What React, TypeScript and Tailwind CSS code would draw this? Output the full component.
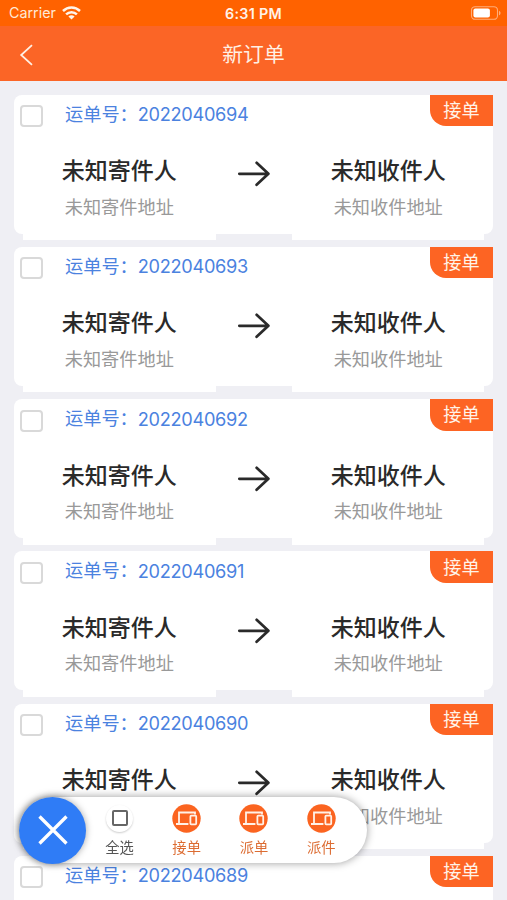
import { clsx } from "clsx";

const orders = [
  "2022040694",
  "2022040693",
  "2022040692",
  "2022040691",
  "2022040690",
  "2022040689",
];

const actions = ["接单", "派单", "派件"];

function StatusBar() {
  return (
    <div className="grid h-[26px] grid-cols-3 items-center bg-[#ff6200] px-[9px] text-white">
      <div className="flex items-center gap-[6px] pt-px text-[#ffe9d6]">
        <span className="text-[14.3px] leading-none">Carrier</span>
        <svg className="h-[14px] w-[19px]" viewBox="0 0 19 14" fill="none" stroke="#fff5ea" strokeWidth="2.5">
          <path d="M1 5C5.8 .4 13.2 .4 18 5" />
          <path d="M4.1 8.4C7.1 5.5 11.9 5.5 14.9 8.4" />
          <path d="M6.4 10.4C8.3 8.8 10.7 8.8 12.6 10.4L9.5 13.5Z" fill="#fff5ea" stroke="none" />
        </svg>
      </div>
      <span className="pt-[2px] text-center text-[14.3px] leading-none font-semibold tracking-[0.3px] whitespace-nowrap text-[#fff3e8]">
        6:31 PM
      </span>
      <svg className="mr-[-9px] h-[14px] w-[38px] justify-self-end" viewBox="0 0 38 14" fill="none">
        <rect x="2.5" y=".7" width="26" height="12.6" rx="3.6" stroke="#ffad79" strokeWidth="1.1" />
        <rect x="4.4" y="2.5" width="16.5" height="9" rx="2" fill="#fff" />
        <path d="M30 4.7c2 .8 2 3.8 0 4.6z" fill="#ffad79" />
      </svg>
    </div>
  );
}

function NavBar() {
  return (
    <div className="grid h-[55px] grid-cols-[60px_1fr_60px] items-center bg-[#fb6526] text-[#fff0e4]">
      <svg className="mt-[2px] ml-[19px] h-[22px] w-[15px]" viewBox="0 0 15 22" fill="none" stroke="currentColor" strokeWidth="1.8">
        <path d="M13 1.2L2.2 11L13 20.8" />
      </svg>
      <h1 className="pt-[4px] text-center text-[20.8px] leading-none font-normal">新订单</h1>
    </div>
  );
}

function Party({ name, address, className }: { name: string; address: string; className?: string }) {
  return (
    <div className={clsx("flex h-[106px] flex-col items-center bg-white pt-[20px]", className)}>
      <p className="text-[23px] leading-[34px] font-medium text-[#2a2a2a]">{name}</p>
      <p className="mt-[3.5px] text-[18.2px] leading-[30px] text-[#999]">{address}</p>
    </div>
  );
}

function OrderCard({ no }: { no: string }) {
  return (
    <div className="mb-[13.25px] h-[139px] rounded-lg bg-white">
      <div className="flex h-[39.5px] items-start">
        <span className="mt-[10.5px] ml-[6px] h-[22px] w-[23px] rounded-[4px] border-2 border-[#d9d9d9] bg-white" />
        <p className="mt-[5px] ml-[22px] flex text-[18.2px] leading-[28px] text-[#4b82df]">
          运单号：<span className="pt-[0.5px] text-[18.2px] tracking-[-0.3px]">{no}</span>
        </p>
        <button className="ml-auto h-[31.5px] w-[63px] rounded-bl-[16px] bg-[#fd6423] pb-px text-[18.2px] leading-[30px] text-[#fff3e8]">
          接单
        </button>
      </div>
      <div className="flex px-[9px]">
        <Party name="未知寄件人" address="未知寄件地址" className="w-[193px]" />
        <div className="flex w-[77px] justify-center pt-[26px]">
          <svg className="h-[28px] w-[34px]" viewBox="0 0 34 28" fill="none" stroke="#2a2a2a" strokeWidth="2.7">
            <path d="M2.3 13.8H31M19.6 2.8L31.4 13.8L19.6 24.8" strokeLinecap="round" strokeLinejoin="round" />
          </svg>
        </div>
        <Party name="未知收件人" address="未知收件地址" className="w-[192px]" />
      </div>
    </div>
  );
}

function DeviceIcon() {
  return (
    <svg className="size-[29px]" viewBox="0 0 29 29" fill="none">
      <circle cx="14.5" cy="14.5" r="14.2" fill="#fb6420" />
      <path d="M7 19V8.5H23V10.4M4 20H16.4" stroke="#fff1e7" strokeWidth="1.8" />
      <rect x="18.4" y="11.7" width="5.8" height="8.6" rx=".8" stroke="#fff1e7" strokeWidth="1.8" />
    </svg>
  );
}

function ActionBar() {
  return (
    <div className="fixed top-[797px] left-[19px] flex h-[66px] w-[348px] items-center rounded-full bg-white shadow-[0_0_8px_rgba(0,0,0,0.4)]">
      <button className="flex size-[67px] shrink-0 items-center justify-center rounded-full bg-[#2f7cf6] shadow-[0_0_7px_rgba(0,0,0,0.35)]">
        <svg className="size-[32px]" viewBox="0 0 32 32" stroke="#fff" strokeWidth="3.3">
          <path d="M2.5 2.5L29.5 29.5M29.5 2.5L2.5 29.5" />
        </svg>
      </button>
      <div className="flex pt-px text-[14.3px] leading-[20px]">
        <div className="flex w-[67px] flex-col items-center pt-px text-[#555]">
          <span className="flex size-[27px] items-center justify-center rounded-full bg-white shadow-[0_1px_2px_rgba(0,0,0,0.2)]">
            <span className="size-[16px] rounded-[2px] border-2 border-[#666]" />
          </span>
          <span className="mt-[6px]">全选</span>
        </div>
        {actions.map((label) => (
          <div key={label} className="flex w-[67.3px] flex-col items-center text-[#dc6c32]">
            <DeviceIcon />
            <span className="mt-[5px]">{label}</span>
          </div>
        ))}
      </div>
    </div>
  );
}

export default function App() {
  return (
    <div className="h-[900px] w-[507px] overflow-hidden bg-[#efeff4] font-[Inter,'Noto_Sans_CJK_SC',sans-serif]">
      <StatusBar />
      <NavBar />
      <div className="px-[14px] pt-[13.5px]">
        {orders.map((no) => (
          <OrderCard key={no} no={no} />
        ))}
      </div>
      <ActionBar />
    </div>
  );
}
